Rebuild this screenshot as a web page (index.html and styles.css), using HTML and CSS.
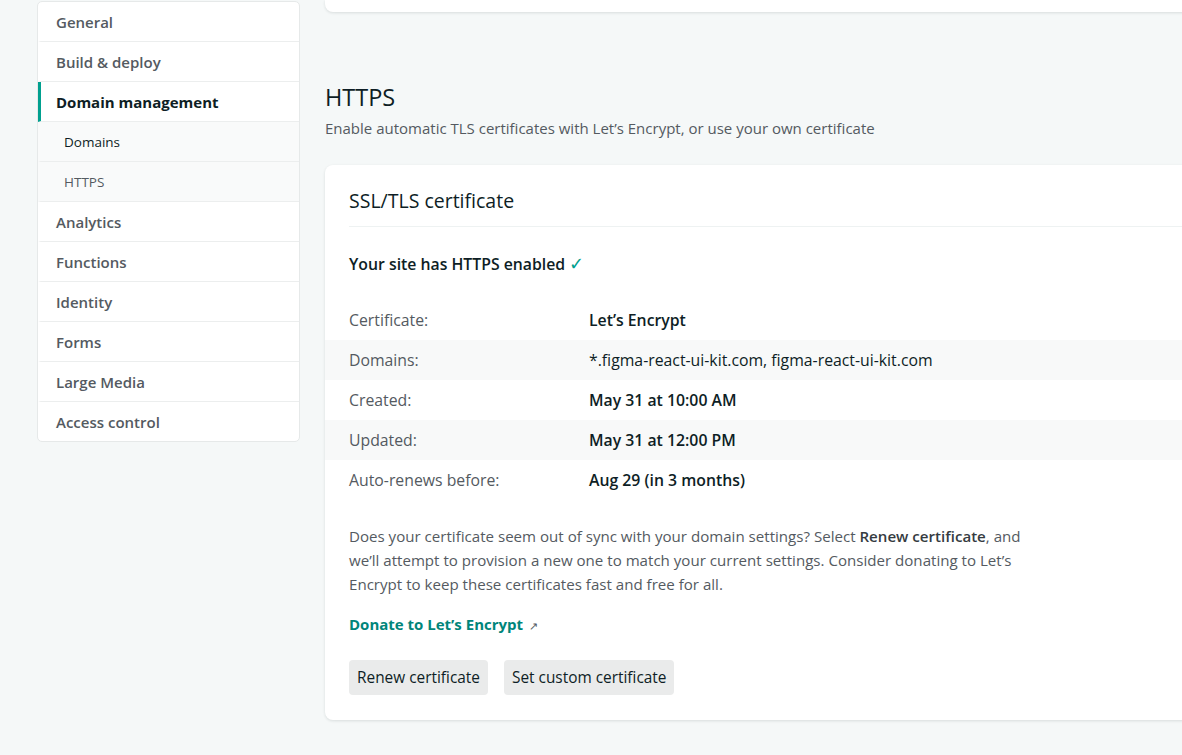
FILE: index.html
```html
<!DOCTYPE html>
<html lang="en">
<head>
<meta charset="utf-8">
<title>HTTPS settings</title>
<link rel="stylesheet" href="styles.css">
</head>
<body>
<div class="layout">
  <nav class="sidenav">
    <a class="nav-item">General</a>
    <a class="nav-item">Build &amp; deploy</a>
    <a class="nav-item active">Domain management</a>
    <a class="nav-item sub current">Domains</a>
    <a class="nav-item sub">HTTPS</a>
    <a class="nav-item">Analytics</a>
    <a class="nav-item">Functions</a>
    <a class="nav-item">Identity</a>
    <a class="nav-item">Forms</a>
    <a class="nav-item">Large Media</a>
    <a class="nav-item last">Access control</a>
  </nav>
  <main class="main">
    <div class="prev-card"></div>
    <section class="section">
      <h2 class="section-title">HTTPS</h2>
      <p class="section-desc">Enable automatic TLS certificates with Let’s Encrypt, or use your own certificate</p>
      <div class="card">
        <h3 class="card-title">SSL/TLS certificate</h3>
        <p class="status">Your site has HTTPS enabled <span class="check">✓</span></p>
        <dl class="details">
          <div class="row"><dt>Certificate:</dt><dd>Let’s Encrypt</dd></div>
          <div class="row striped"><dt>Domains:</dt><dd class="normal">*.figma-react-ui-kit.com, figma-react-ui-kit.com</dd></div>
          <div class="row"><dt>Created:</dt><dd>May 31 at 10:00 AM</dd></div>
          <div class="row striped"><dt>Updated:</dt><dd>May 31 at 12:00 PM</dd></div>
          <div class="row"><dt>Auto-renews before:</dt><dd>Aug 29 (in 3 months)</dd></div>
        </dl>
        <p class="note">Does your certificate seem out of sync with your domain settings? Select <strong>Renew certificate</strong>, and we’ll attempt to provision a new one to match your current settings. Consider donating to Let’s Encrypt to keep these certificates fast and free for all.</p>
        <a class="donate">Donate to Let’s Encrypt <span class="ext">↗</span></a>
        <div class="actions">
          <button class="btn">Renew certificate</button>
          <button class="btn">Set custom certificate</button>
        </div>
      </div>
    </section>
  </main>
</div>
</body>
</html>
```
FILE: styles.css
```css
* { box-sizing: border-box; }
html, body {
  margin: 0;
  padding: 0;
  height: 100%;
  overflow: hidden;
}
body {
  background: #f5f8f8;
  font-family: "Open Sans", "Noto Sans", sans-serif;
  color: #0e1e25;
  font-size: 15.8px;
}
.layout {
  display: flex;
  align-items: flex-start;
  gap: 25px;
  padding-left: 37px;
}
.sidenav {
  flex: 0 0 263px;
  margin-top: 1px;
  background: #fff;
  border: 1px solid #e6e9e9;
  border-radius: 5px;
  display: flex;
  flex-direction: column;
  overflow: hidden;
}
.nav-item {
  height: 40px;
  display: flex;
  align-items: center;
  padding: 1px 0 0 15px;
  border-bottom: 1px solid #eceeee;
  color: #545a61;
  font-weight: 600;
  font-size: 15px;
  border-left: 3px solid transparent;
}
.nav-item.last { border-bottom: 0; height: 39px; }
.nav-item.active {
  border-left-color: #00a08f;
  color: #0e1e25;
  font-weight: 700;
}
.nav-item.sub {
  background: #f9fafa;
  padding-left: 23px;
  font-size: 13.5px;
  font-weight: 400;
}
.nav-item.current { color: #0e1e25; }

.main {
  flex: 0 0 900px;
  display: flex;
  flex-direction: column;
}
.prev-card {
  height: 12px;
  background: #fff;
  border-radius: 0 0 8px 8px;
  box-shadow: 0 1px 3px rgba(14, 30, 37, 0.12);
}
.section { padding-top: 69px; }
.section-title {
  margin: 0;
  font-size: 23.5px;
  line-height: 32px;
  font-weight: 500;
  color: #0e1e25;
}
.section-desc {
  margin: 5px 0 0;
  line-height: 20px;
  font-size: 15px;
  color: #545a61;
}
.card {
  margin-top: 27px;
  background: #fff;
  border-radius: 8px;
  box-shadow: 0 1px 3px rgba(14, 30, 37, 0.12);
  padding: 22px 24px 25px;
}
.card-title {
  margin: 0;
  font-size: 19.5px;
  line-height: 28px;
  font-weight: 500;
  padding-bottom: 11px;
  border-bottom: 1px solid #eef2f2;
}
.status {
  margin: 24px 0 0;
  line-height: 24px;
  font-weight: 600;
}
.check { color: #00a08f; font-weight: 400; font-size: 18px; }
.details {
  margin: 24px -24px 0;
}
.row {
  display: flex;
  height: 40px;
  align-items: center;
  padding: 0 24px;
}
.row.striped { background: #f8f9f9; }
.row dt {
  width: 240px;
  color: #545a61;
}
.row dd {
  margin: 0;
  font-weight: 600;
}
.row dd.normal { font-weight: 400; }
.note {
  margin: 24px 0 0;
  max-width: 690px;
  line-height: 24px;
  font-size: 15.1px;
  color: #545a61;
}
.note strong { color: #353b41; font-weight: 600; }
.donate {
  display: block;
  margin-top: 16px;
  line-height: 24px;
  font-size: 15px;
  color: #00857a;
  font-weight: 700;
}
.ext { font-weight: 400; font-size: 11px; color: #545a61; margin-left: 2px; }
.actions {
  display: flex;
  gap: 16px;
  margin-top: 22px;
}
.btn {
  height: 35px;
  padding: 0 8px;
  border: 0;
  border-radius: 4px;
  background: #eaebeb;
  color: #0e1e25;
  font-family: inherit;
  font-size: 15.4px;
  font-weight: 500;
}
```
